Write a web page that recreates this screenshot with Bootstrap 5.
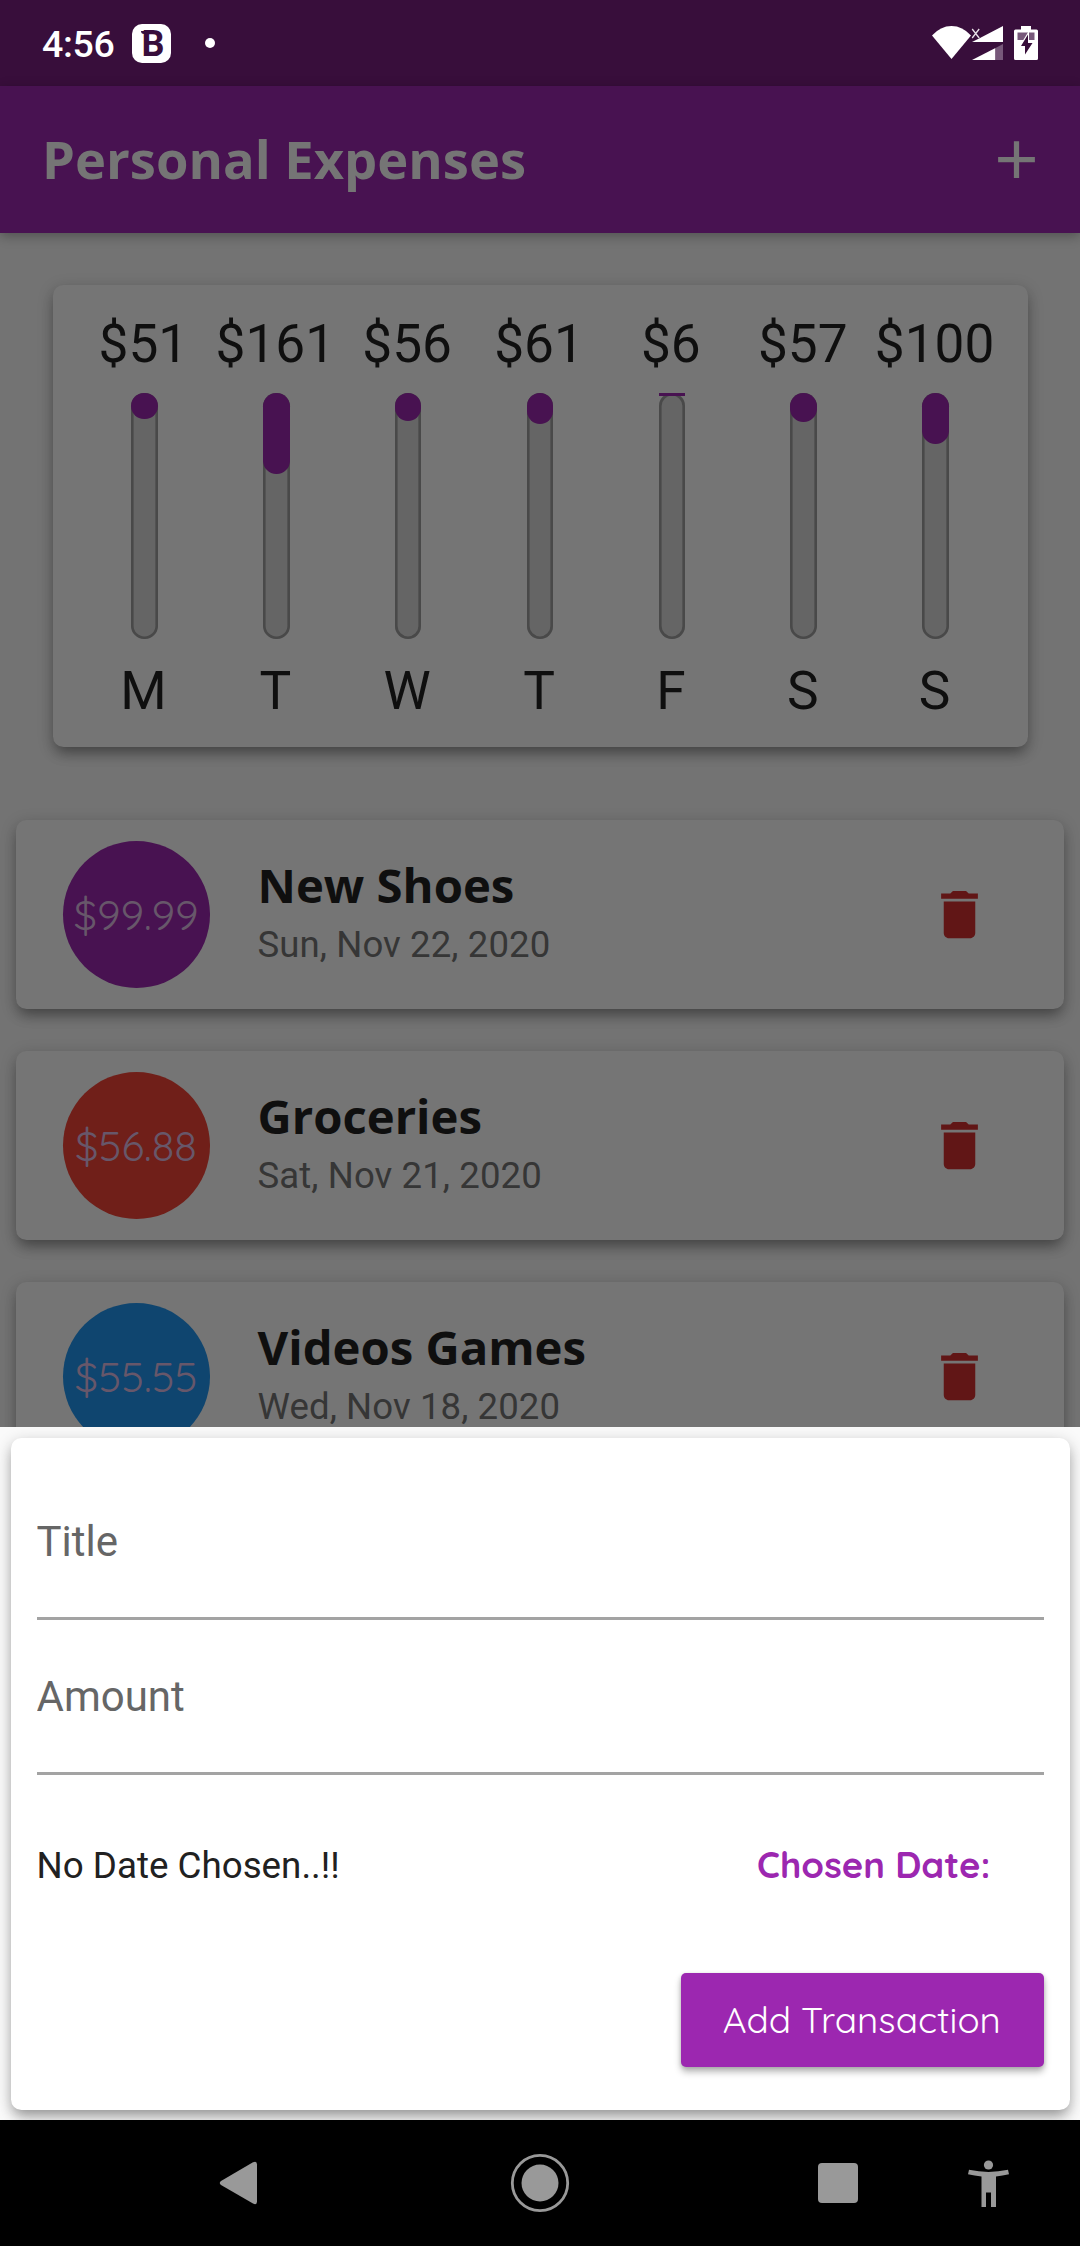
<!DOCTYPE html>
<html lang="en">
<head>
<meta charset="utf-8">
<meta name="viewport" content="width=device-width, initial-scale=1">
<title>Personal Expenses</title>
<link href="https://cdn.jsdelivr.net/npm/bootstrap@5.3.0/dist/css/bootstrap.min.css" rel="stylesheet">
<style>
  body { font-family: Roboto, sans-serif; background: #000; color: #0f0f0f; }
  .phone { width: 1080px; height: 2246px; }
  .status-strip { height: 86px; background: #380e3b; padding: 0 42px 0 42px; }
  .clock { font-size: 37.5px; font-weight: 500; line-height: 86px; width: 90px; letter-spacing: -.3px; padding-top: 1px; }
  .b-badge { width: 39px; height: 39px; border-radius: 10px; background: #fff; color: #380e3b; font: 700 36px/40px Roboto, sans-serif; padding-left: 9.5px; position: relative; }
  .b-badge::before { content: ""; position: absolute; left: 8.5px; top: 7.2px; width: 8px; height: 3.8px; background: #380e3b; border-bottom-left-radius: 4px; }
  .note-dot { width: 10px; height: 10px; border-radius: 50%; background: #fff; margin-left: 34px; }
  .app-strip { height: 147px; background: #481251; color: #757575; padding: 0 32px 0 42px; box-shadow: 0 3px 11px rgba(0,0,0,.3); z-index: 1; }
  .app-title { font: bold 52.5px/72px "Open Sans", sans-serif; margin-top: -2px; }
  .dimmed { background: #737373; height: 1194px; padding-top: 52px; }
  .raised { border: 0; border-radius: 10.5px; box-shadow: 0 9px 13px -3px rgba(0,0,0,.27), 0 4px 16px rgba(0,0,0,.22); }
  .chart-panel { background: #757575; height: 461.5px; margin: 0 52.5px; padding: 28px 26px 24px; color: #0f0f0f; }
  .day-col { flex: 1 1 0; min-width: 0; font-size: 53.2px; line-height: 62px; }
  .day-col span { white-space: nowrap; margin-right: 2px; }
  .gauge { width: 26.5px; height: 246px; box-shadow: inset 0 0 0 2.6px #494949; border-radius: 13.25px; background: #656565; margin: 18px 0 21px; }
  .gauge-fill { width: 26.5px; background: #481251; border-radius: 13.25px; }
  .gauge-flat { border-radius: 0; }
  .tx-list { margin-top: 73.5px; gap: 42px; padding: 0 16px; }
  .tx-card { background: #757575; height: 189px; padding: 0 73px 0 47px; flex: none; }
  .price { width: 147px; height: 147px; font: 400 42px/147px Quicksand, Lato, sans-serif; font-kerning: none; color: #67576a; padding-right: 1px; }
  .tone-purple { background: #481251; } .tone-red { background: #701f19; } .tone-blue { background: #0f456f; }
  .tx-text { margin-left: 47.5px; margin-top: -10px; }
  .tx-name { font: bold 47.25px/64px "Open Sans", sans-serif; color: #0f0f0f; }
  .tx-date { font-size: 36.6px; line-height: 43px; color: #363636; margin-top: 6px; letter-spacing: .08px; }
  .sheet { background: #fafafa; height: 693px; padding: 10.5px; z-index: 2; overflow: hidden; }
  .sheet-panel { height: 672px; background: #fff; padding: 27px 26px 43px; border-radius: 10.5px; }
  .field { border: 0; border-bottom: 3px solid #a3a3a3; border-radius: 0; height: 155px; padding: 2px 0 0; font-size: 42px; line-height: 50px; color: #666; background: transparent; box-shadow: none; }
  .field::placeholder { color: #666; opacity: 1; }
  .date-row { height: 126px; margin-top: 28px; font-size: 36.75px; color: #212121; padding-right: 53px; }
  .date-btn { color: #9c27b0; font: 700 36.5px/44px Quicksand, Lato, sans-serif; padding: 0; border: 0; margin-top: -4px; }
  .add-btn { width: 362.5px; height: 94px; background: #9c27b0; color: #fff; border: 0; border-radius: 5px; font: 400 36.75px/44px Quicksand, Lato, sans-serif; box-shadow: 0 5px 7px rgba(0,0,0,.28), 0 1px 4px rgba(0,0,0,.15); padding: 0 1px 2px 0; }
  .system-nav { height: 126px; background: #000; }
</style>
</head>
<body>
<div class="phone d-flex flex-column overflow-hidden">
  <div class="status-strip d-flex align-items-center text-white">
    <div class="clock">4:56</div>
    <div class="b-badge">B</div>
    <div class="note-dot"></div>
    <svg class="ms-auto" width="106" height="34" viewBox="0 0 106 34" fill="#fff">
      <path d="M0 9.500Q8.500 0 19.500 0T39 9.500L19.500 33Z"/>
      <path d="M71 0V16H40L48 12Z"/>
      <path d="M40.200 3l7 9M47.200 3l-7 9" stroke="#380e3b" stroke-width="3.500"/>
      <path d="M40.200 3l7 9M47.200 3l-7 9" stroke="#e8e0e8" stroke-width="1.300"/>
      <path d="M40 34L63.500 22V34Z"/><path d="M63.500 22L71 18V34H63.500Z" fill="#77587a"/>
      <path d="M89 0h10v3.500h5.500q1.500 0 1.500 1.500v27.500q0 1.500-1.500 1.500H83.500Q82 34 82 32.500V5q0-1.500 1.500-1.500H89Z"/>
      <path d="M85.500 6.500h17V14h-17Z" fill="#77587a"/>
      <path d="M96.500 5.500L87 21h5.500v9L101.500 16h-4.500V5.500Z" fill="#fff"/>
      <path d="M96 8.500L89 20h4v8.500L100.500 17H96Z" fill="#380e3b"/>
    </svg>
  </div>
  <header class="app-strip d-flex align-items-center justify-content-between position-relative">
    <div class="app-title">Personal Expenses</div>
    <svg width="63" height="63" viewBox="0 0 24 24" fill="#757575"><path d="M19 13h-6v6h-2v-6H5v-2h6V5h2v6h6v2z"/></svg>
  </header>
  <main class="dimmed overflow-hidden">
    <section class="card raised chart-panel d-flex flex-row">
      <div class="day-col d-flex flex-column align-items-center"><span>$51</span><div class="gauge"><div class="gauge-fill" style="height:26px"></div></div><span>M</span></div>
      <div class="day-col d-flex flex-column align-items-center"><span>$161</span><div class="gauge"><div class="gauge-fill" style="height:81px"></div></div><span>T</span></div>
      <div class="day-col d-flex flex-column align-items-center"><span>$56</span><div class="gauge"><div class="gauge-fill" style="height:28px"></div></div><span>W</span></div>
      <div class="day-col d-flex flex-column align-items-center"><span>$61</span><div class="gauge"><div class="gauge-fill" style="height:31px"></div></div><span>T</span></div>
      <div class="day-col d-flex flex-column align-items-center"><span>$6</span><div class="gauge"><div class="gauge-fill gauge-flat" style="height:3px"></div></div><span>F</span></div>
      <div class="day-col d-flex flex-column align-items-center"><span>$57</span><div class="gauge"><div class="gauge-fill" style="height:29px"></div></div><span>S</span></div>
      <div class="day-col d-flex flex-column align-items-center"><span>$100</span><div class="gauge"><div class="gauge-fill" style="height:51px"></div></div><span>S</span></div>
    </section>
    <section class="tx-list d-flex flex-column">
      <article class="card raised tx-card d-flex flex-row align-items-center">
        <div class="price tone-purple rounded-circle text-center">$99.99</div>
        <div class="tx-text"><div class="tx-name">New Shoes</div><div class="tx-date">Sun, Nov 22, 2020</div></div>
        <svg class="ms-auto" width="63" height="63" viewBox="0 0 24 24" fill="#611616"><path d="M6 19c0 1.100.9 2 2 2h8c1.100 0 2-.9 2-2V7H6v12zM19 4h-3.500l-1-1h-5l-1 1H5v2h14V4z"/></svg>
      </article>
      <article class="card raised tx-card d-flex flex-row align-items-center">
        <div class="price tone-red rounded-circle text-center">$56.88</div>
        <div class="tx-text"><div class="tx-name">Groceries</div><div class="tx-date">Sat, Nov 21, 2020</div></div>
        <svg class="ms-auto" width="63" height="63" viewBox="0 0 24 24" fill="#611616"><path d="M6 19c0 1.100.9 2 2 2h8c1.100 0 2-.9 2-2V7H6v12zM19 4h-3.500l-1-1h-5l-1 1H5v2h14V4z"/></svg>
      </article>
      <article class="card raised tx-card d-flex flex-row align-items-center">
        <div class="price tone-blue rounded-circle text-center">$55.55</div>
        <div class="tx-text"><div class="tx-name">Videos Games</div><div class="tx-date">Wed, Nov 18, 2020</div></div>
        <svg class="ms-auto" width="63" height="63" viewBox="0 0 24 24" fill="#611616"><path d="M6 19c0 1.100.9 2 2 2h8c1.100 0 2-.9 2-2V7H6v12zM19 4h-3.500l-1-1h-5l-1 1H5v2h14V4z"/></svg>
      </article>
    </section>
  </main>
  <section class="sheet position-relative">
    <form class="card raised sheet-panel">
      <input class="form-control field" type="text" placeholder="Title" aria-label="Title">
      <input class="form-control field" type="text" placeholder="Amount" aria-label="Amount">
      <div class="date-row d-flex align-items-center justify-content-between">
        <span>No Date Chosen..!!</span>
        <button class="btn date-btn" type="button">Chosen Date:</button>
      </div>
      <button class="btn add-btn align-self-end mt-auto" type="button">Add Transaction</button>
    </form>
  </section>
  <nav class="system-nav">
    <svg width="1080" height="126" viewBox="0 0 1080 126" fill="#999">
      <path d="M221 61L253 42.300Q257 40.500 257 44.500V81.500Q257 85.500 253 83.500L221 65Q218.500 63 221 61Z"/>
      <circle cx="540" cy="63" r="18.500"/><circle cx="540" cy="63" r="27.700" fill="none" stroke="#999" stroke-width="2.800"/>
      <rect x="818" y="43" width="40" height="40" rx="4"/>
      <circle cx="988.500" cy="45" r="4.600"/>
      <path d="M969 49.800Q988.500 54 1008 49.800L1009 54.300Q1002.500 55.900 996 56.500V87H991V72.500H986V87H981.500V56.500Q974.500 55.900 968 54.300Z"/>
    </svg>
  </nav>
</div>
<script src="https://cdn.jsdelivr.net/npm/bootstrap@5.3.0/dist/js/bootstrap.bundle.min.js"></script>
</body>
</html>
